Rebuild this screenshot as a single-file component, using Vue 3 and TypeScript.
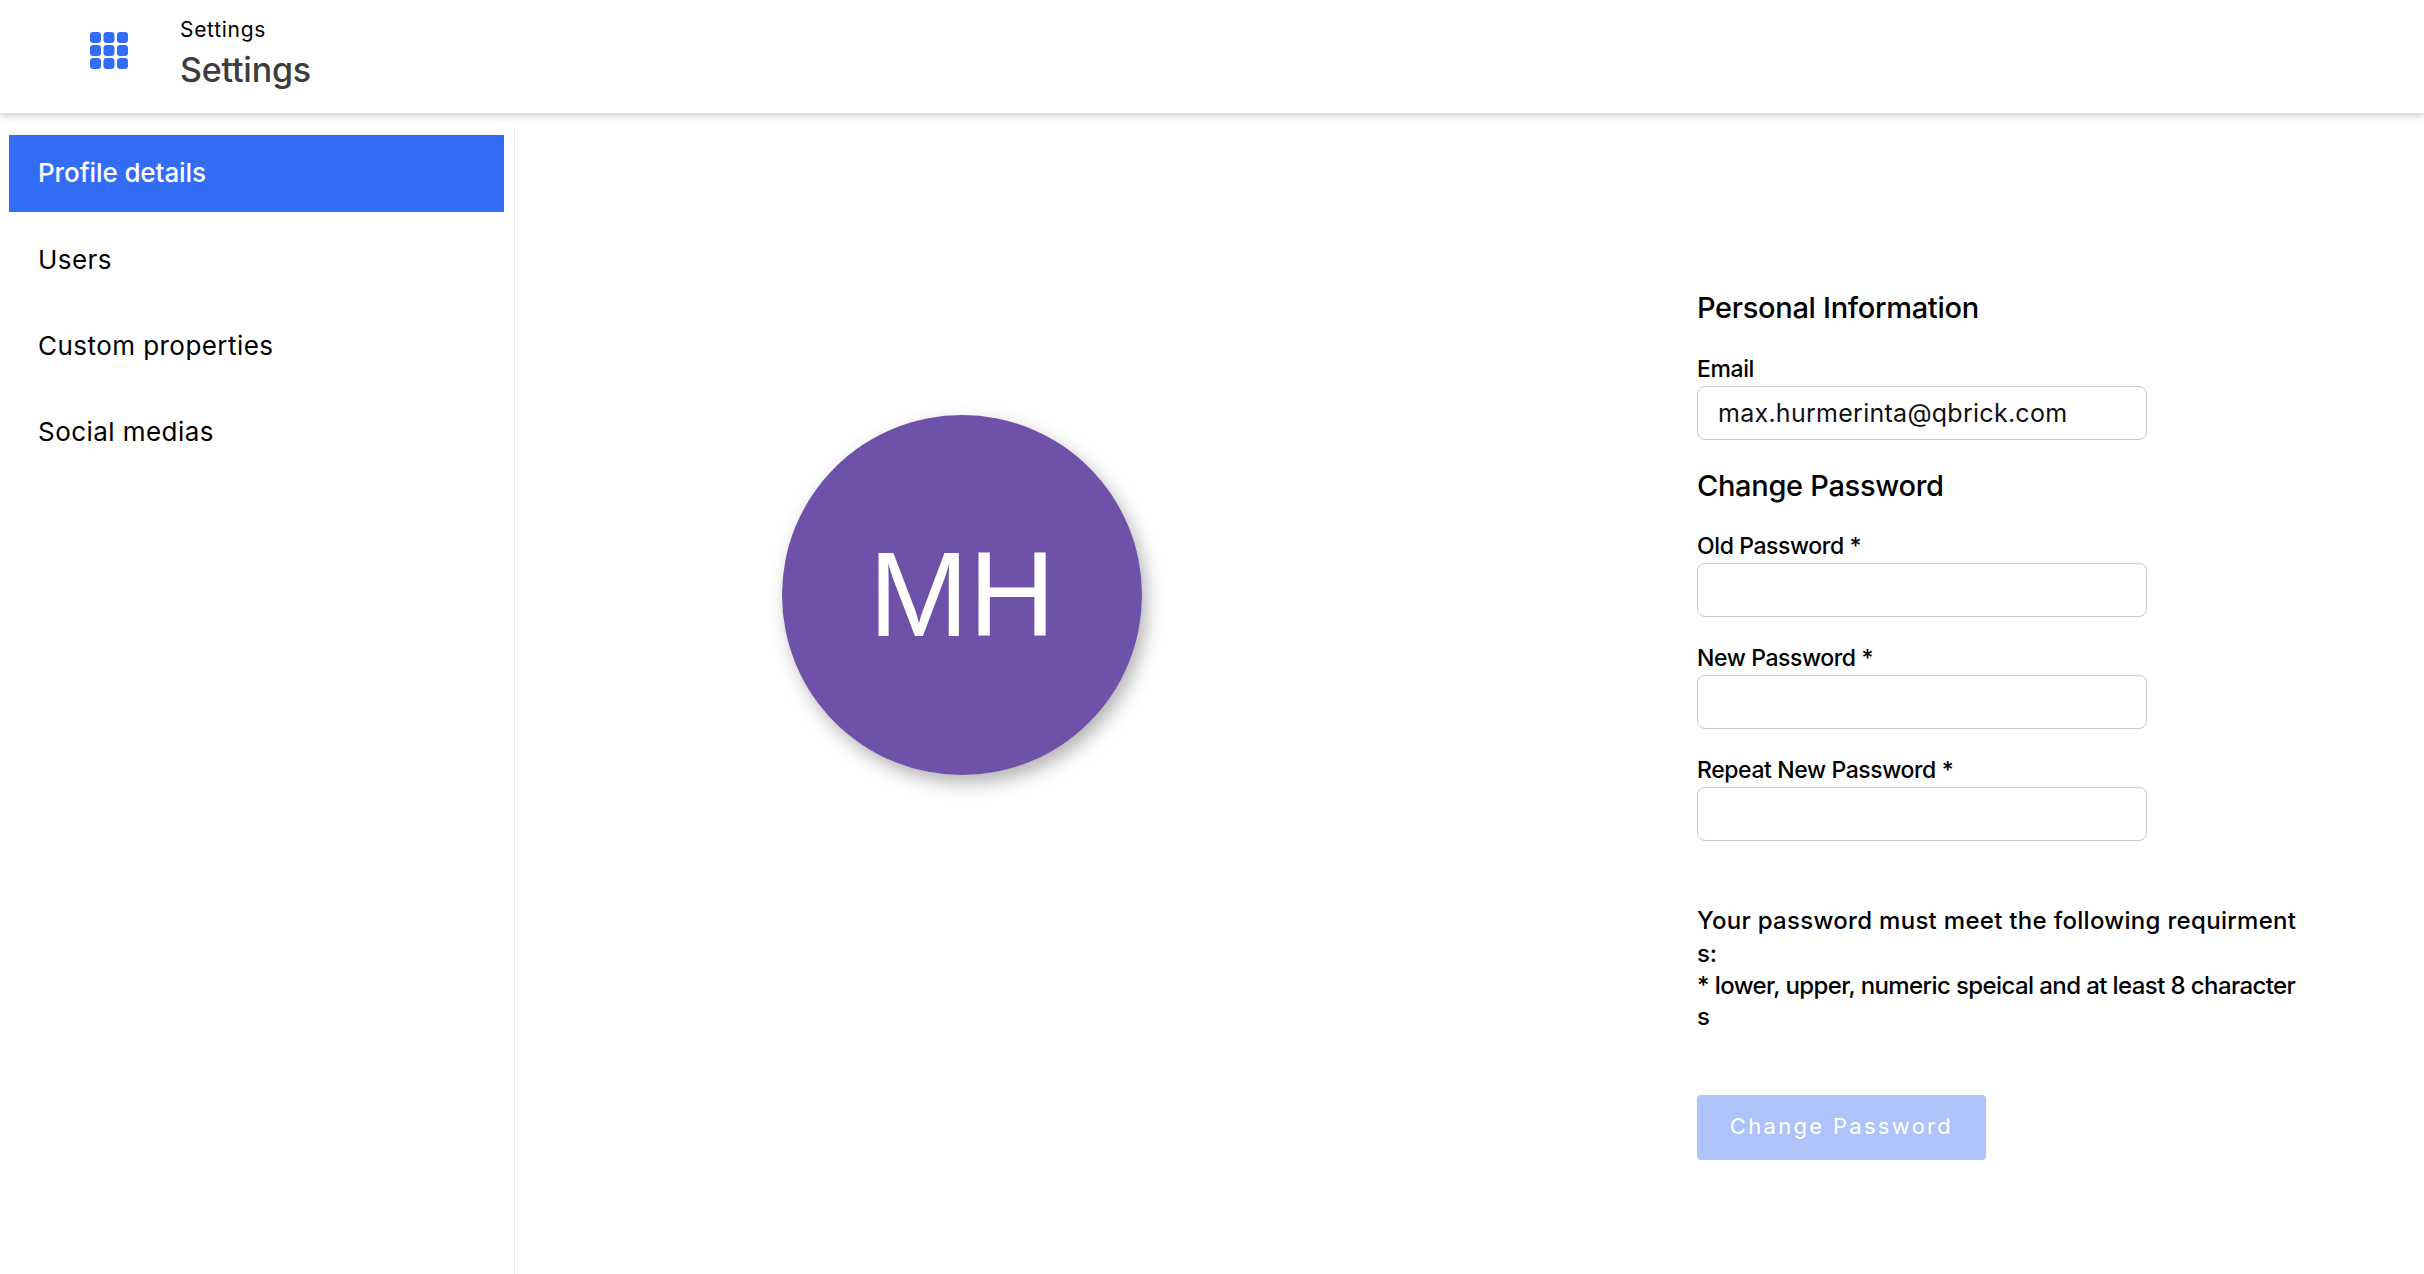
<script setup lang="ts">
const navItems: string[] = ['Profile details', 'Users', 'Custom properties', 'Social medias']
</script>

<template>
  <div class="page">
    <header class="topbar">
      <svg class="apps" width="38" height="37" viewBox="0 0 38 37" aria-hidden="true">
        <g fill="#346df5">
          <rect x="0" y="0" width="11" height="11" rx="3.2" />
          <rect x="13.5" y="0" width="11" height="11" rx="3.2" />
          <rect x="27" y="0" width="11" height="11" rx="3.2" />
          <rect x="0" y="13" width="11" height="11" rx="3.2" />
          <rect x="13.5" y="13" width="11" height="11" rx="3.2" />
          <rect x="27" y="13" width="11" height="11" rx="3.2" />
          <rect x="0" y="26" width="11" height="11" rx="3.2" />
          <rect x="13.5" y="26" width="11" height="11" rx="3.2" />
          <rect x="27" y="26" width="11" height="11" rx="3.2" />
        </g>
      </svg>
      <div class="titles">
        <div class="crumb">Settings</div>
        <div class="title">Settings</div>
      </div>
    </header>
    <div class="body">
      <nav class="sidebar">
        <a v-for="(item, i) in navItems" :key="item" class="nav-item" :class="{ active: i === 0 }">{{ item }}</a>
      </nav>
      <main class="content">
        <div class="avatar-col">
          <div class="avatar">MH</div>
        </div>
        <form class="form" @submit.prevent>
          <h2 class="heading">Personal Information</h2>
          <label class="label first">Email</label>
          <input class="input" type="text" value="max.hurmerinta@qbrick.com" />
          <h2 class="heading second">Change Password</h2>
          <label class="label old">Old Password *</label>
          <input class="input" type="password" />
          <label class="label">New Password *</label>
          <input class="input" type="password" />
          <label class="label">Repeat New Password *</label>
          <input class="input" type="password" />
          <p class="req">
            <span class="req-line tall wide">Your password must meet the following requirment</span>
            <span class="req-line tall short">s:</span>
            <span class="req-line narrow">* lower, upper, numeric speical and at least 8 character</span>
            <span class="req-line">s</span>
          </p>
          <button class="submit" type="button" disabled>Change Password</button>
        </form>
      </main>
    </div>
  </div>
</template>

<style>
html, body { margin: 0; background: #fff; overflow: hidden; }
</style>

<style scoped>
.page {
  width: 2424px;
  height: 1274px;
  display: flex;
  flex-direction: column;
  background: #fff;
  font-family: "Inter", "Noto Sans", sans-serif;
  color: #000;
  overflow: hidden;
}
.topbar {
  height: 113px;
  flex: none;
  display: flex;
  align-items: center;
  padding-left: 90px;
  box-sizing: border-box;
  background: #fff;
  box-shadow: 0 2px 8px rgba(60, 70, 100, 0.3);
  position: relative;
  z-index: 1;
}
.apps { margin-top: -12px; flex: none; }
.titles { margin-left: 52px; margin-top: -10px; }
.crumb { font-size: 21px; line-height: 34px; letter-spacing: 0.7px; }
.title { font-size: 34px; line-height: 42px; margin-top: 2px; font-weight: 500; color: #3c3c3c; letter-spacing: -0.2px; }
.body { flex: 1; display: flex; min-height: 0; }
.sidebar {
  width: 515px;
  flex: none;
  box-sizing: border-box;
  margin-top: 14px;
  padding: 8px 10px 0 9px;
  border-right: 1px solid #e8e8e8;
  display: flex;
  flex-direction: column;
  gap: 9px;
}
.nav-item {
  height: 77px;
  display: flex;
  align-items: center;
  padding-left: 29px;
  font-size: 26px;
  letter-spacing: 0.45px;
}
.nav-item.active { background: #346df5; color: #fff; font-weight: 500; letter-spacing: -0.1px; padding-bottom: 2px; height: 75px; }
.content { flex: 1; display: flex; min-width: 0; }
.avatar-col { width: 1182px; flex: none; padding: 302px 0 0 267px; box-sizing: border-box; }
.avatar {
  width: 360px;
  height: 358px;
  padding-bottom: 2px;
  border-radius: 50%;
  background: #6f51a9;
  color: #fff;
  font-family: "Liberation Sans", sans-serif;
  font-size: 120px;
  display: flex;
  align-items: center;
  justify-content: center;
  box-shadow: 5px 8px 18px rgba(0, 0, 0, 0.3);
}
.form { width: 620px; flex: none; padding-top: 175px; display: flex; flex-direction: column; align-items: flex-start; }
.heading { margin: 0; font-size: 29px; line-height: 40px; font-weight: 500; letter-spacing: -0.3px; }
.heading.second { margin-top: 26px; }
.label { font-size: 23px; line-height: 33px; margin-top: 25px; font-weight: 500; letter-spacing: -0.4px; }
.label.first { margin-top: 24px; line-height: 34px; }
.label.old { margin-top: 24px; }
.input {
  width: 450px;
  height: 54px;
  box-sizing: border-box;
  border: 1px solid #c8c8c8;
  border-radius: 8px;
  padding: 0 20px;
  font: 400 25px "Inter", sans-serif;
  letter-spacing: 0.27px;
  color: #111;
  background: #fff;
  outline: none;
}
.req { margin: 63px 0 0; font-size: 24px; font-weight: 500; letter-spacing: -0.3px; }
.req-line { display: block; line-height: 31px; white-space: nowrap; }
.req-line.tall { line-height: 34px; }
.req-line.short { line-height: 32px; }
.req-line.wide { letter-spacing: 0.3px; }
.req-line.narrow { letter-spacing: -0.6px; }
.submit {
  margin-top: 63px;
  width: 289px;
  height: 65px;
  border: 0;
  border-radius: 4px;
  background: #adc3f9;
  color: #fff;
  font: 400 22px "Inter", sans-serif;
  letter-spacing: 2.3px;
  padding: 0 0 4px;
}
</style>
